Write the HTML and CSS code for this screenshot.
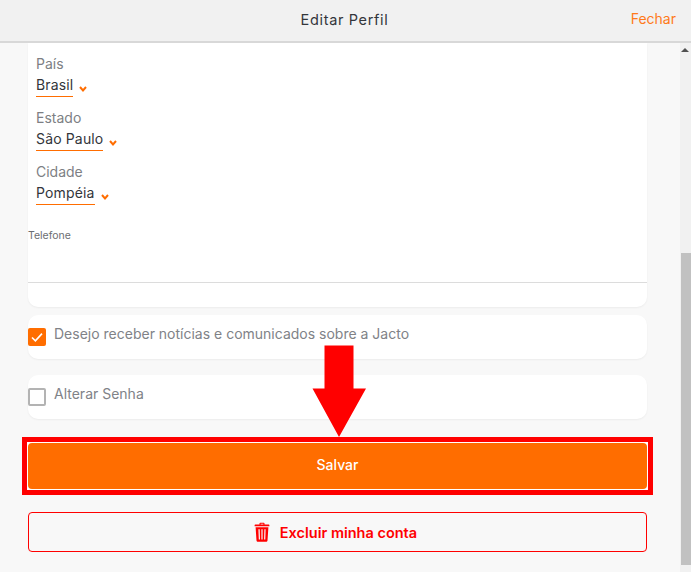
FILE: index.html
```html
<!DOCTYPE html>
<html lang="pt-BR">

<head>
    <meta charset="UTF-8">
    <meta name="viewport" content="width=device-width, initial-scale=1.0">
    <title>Editar Perfil</title>
    <link rel="stylesheet" href="styles.css">
</head>

<body>
    <header class="topbar">
        <h1>Editar Perfil</h1>
        <a class="close">Fechar</a>
    </header>

    <div class="page">
        <main class="content">
            <section class="card form-card">
                <div class="select-field">
                    <label>País</label>
                    <div class="select-row">
                        <span class="select-value">Brasil</span>
                        <svg class="chevron" viewBox="0 0 8 6"><path d="M1 1l3 3.400L7 1" /></svg>
                    </div>
                </div>
                <div class="select-field">
                    <label>Estado</label>
                    <div class="select-row">
                        <span class="select-value">São Paulo</span>
                        <svg class="chevron" viewBox="0 0 8 6"><path d="M1 1l3 3.400L7 1" /></svg>
                    </div>
                </div>
                <div class="select-field">
                    <label>Cidade</label>
                    <div class="select-row">
                        <span class="select-value">Pompéia</span>
                        <svg class="chevron" viewBox="0 0 8 6"><path d="M1 1l3 3.400L7 1" /></svg>
                    </div>
                </div>
                <div class="phone-field">
                    <label>Telefone</label>
                </div>
            </section>

            <section class="card check-card">
                <span class="checkbox checked">
                    <svg viewBox="0 0 18 18"><path d="M4 9.500l3.400 3.400L14 5.600" /></svg>
                </span>
                <span class="check-label">Desejo receber notícias e comunicados sobre a Jacto</span>
            </section>

            <section class="card check-card last">
                <span class="checkbox"></span>
                <span class="check-label">Alterar Senha</span>
            </section>

            <div class="save-frame">
                <button class="save">Salvar</button>
            </div>

            <button class="delete">
                <svg class="trash" viewBox="0 0 16 20">
                    <path d="M5.500 2.500V1.600c0-.5.3-.8.8-.8h3.400c.5 0 .8.3.8.8v.9h4.200c.4 0 .7.3.7.7v1.100H.6V3.200c0-.4.3-.7.7-.7zm1.100 0h2.800v-.7H6.600z" />
                    <path fill-rule="evenodd" d="M1.600 5.200h12.800l-.9 13.200c-.1.9-.7 1.400-1.500 1.400H4c-.8 0-1.400-.5-1.500-1.400zM4.400 7.200l.4 10.200h1.200L5.700 7.200zm3 0v10.200h1.200V7.200zm3 0l-.3 10.200h1.200l.3-10.200z" />
                </svg>
                Excluir minha conta
            </button>
        </main>

        <div class="scrollbar">
            <span class="arrow-up"></span>
            <div class="thumb"></div>
        </div>
    </div>

    <!-- seta vermelha por cima da tela -->
    <svg class="pointer" viewBox="0 0 54 92">
        <path d="M12.500 0.500h29v43h12.500L27 92 0.500 43.500h12z" />
    </svg>
</body>

</html>
```

FILE: styles.css
```css
* {
    box-sizing: border-box;
}

html,
body {
    height: 100%;
}

body {
    margin: 0;
    display: flex;
    flex-direction: column;
    overflow: hidden;
    background: #f8f8f8;
    font-family: "Inter", "Liberation Sans", sans-serif;
    color: #33363b;
}

.topbar {
    height: 43px;
    flex: none;
    display: flex;
    align-items: center;
    justify-content: center;
    position: relative;
    background: #f1f1f1;
    border-bottom: 2px solid #d8d8d8;
}

.topbar h1 {
    margin: 0 2px 2px 0;
    font-size: 14.500px;
    font-weight: 400;
    letter-spacing: 0.650px;
}

.close {
    position: absolute;
    right: 15px;
    top: 10px;
    font-size: 14px;
    color: #ff7a1a;
}

.page {
    flex: 1;
    display: flex;
    min-height: 0;
}

.content {
    flex: 1;
    padding: 0 33px 0 28px;
}

.card {
    background: #fff;
    border-radius: 0 0 10px 10px;
    box-shadow: 0 1px 2px rgba(0, 0, 0, 0.05);
}

.form-card {
    height: 264px;
    padding-top: 11px;
}

.select-field {
    padding-left: 8px;
    height: 54px;
}

.select-field label {
    display: block;
    height: 19px;
    font-size: 14px;
    line-height: 19px;
    color: #7d7f84;
}

.select-row {
    display: flex;
    align-items: flex-start;
    margin-top: 2px;
}

.select-value {
    height: 22px;
    font-size: 14px;
    line-height: 20px;
    letter-spacing: 0.150px;
    border-bottom: 1px solid #ff6d00;
}

.chevron {
    width: 8px;
    height: 6px;
    margin: 11px 0 0 6px;
    fill: none;
    stroke: #ff6d00;
    stroke-width: 2;
}

.phone-field {
    height: 62px;
    margin-top: 5px;
    padding-top: 8px;
    border-bottom: 1px solid #dcdcdc;
}

.phone-field label {
    display: block;
    font-size: 10.500px;
    line-height: 14px;
    color: #6b6d71;
}

.check-card {
    height: 44px;
    margin-top: 8px;
    display: flex;
    align-items: flex-start;
    border-radius: 10px;
}

.check-card.last {
    margin-top: 16px;
}

.checkbox {
    width: 18px;
    height: 18px;
    margin-top: 13px;
    flex: none;
    border: 2px solid #b3b3b3;
    border-radius: 2px;
}

.checkbox.checked {
    border: none;
    background: #ff6d00;
}

.checkbox svg {
    display: block;
    fill: none;
    stroke: #fff;
    stroke-width: 1.600;
}

.check-label {
    margin: 10px 0 0 8px;
    font-size: 14px;
    line-height: 18px;
    color: #808287;
}

.save-frame {
    margin: 18px -6px 0 -6px;
    height: 58px;
    padding: 1px;
    border: 5px solid #ff0000;
    background: #fff;
}

.save {
    display: block;
    width: 100%;
    height: 100%;
    padding-bottom: 4px;
    border: none;
    border-radius: 4px;
    background: #ff6d00;
    color: #fff;
    font-family: inherit;
    font-size: 14px;
    font-weight: 500;
}

.delete {
    display: flex;
    align-items: center;
    justify-content: center;
    gap: 10px;
    width: 100%;
    height: 40px;
    margin-top: 17px;
    padding: 0 4px 0 0;
    border: 1px solid #ff0000;
    border-radius: 4px;
    background: transparent;
    color: #ff0000;
    font-family: inherit;
    font-size: 14.500px;
    font-weight: 600;
}

.trash {
    width: 16px;
    height: 20px;
    fill: #ff0000;
}

.scrollbar {
    width: 11px;
    flex: none;
    position: relative;
    background: #f1f1f1;
}

.arrow-up {
    position: absolute;
    top: 5px;
    left: 1px;
    border-left: 4px solid transparent;
    border-right: 4px solid transparent;
    border-bottom: 4px solid #505050;
}

.thumb {
    position: absolute;
    top: 210px;
    left: 1px;
    width: 10px;
    height: 312px;
    background: #c1c1c1;
}

.pointer {
    position: absolute;
    left: 312px;
    top: 345px;
    width: 54px;
    height: 92px;
    fill: #ff0000;
}
```
